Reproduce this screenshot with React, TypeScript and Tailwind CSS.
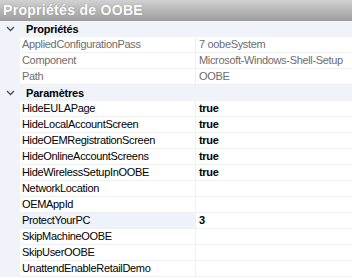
const font = { fontFamily: '"Liberation Sans", Arial, sans-serif' };

type Row = { name: string; value?: string; bold?: boolean; hl?: boolean };

const props: Row[] = [
  { name: 'AppliedConfigurationPass', value: '7 oobeSystem' },
  { name: 'Component', value: 'Microsoft-Windows-Shell-Setup' },
  { name: 'Path', value: 'OOBE' },
];

const params: Row[] = [
  { name: 'HideEULAPage', value: 'true', bold: true },
  { name: 'HideLocalAccountScreen', value: 'true', bold: true },
  { name: 'HideOEMRegistrationScreen', value: 'true', bold: true },
  { name: 'HideOnlineAccountScreens', value: 'true', bold: true },
  { name: 'HideWirelessSetupInOOBE', value: 'true', bold: true },
  { name: 'NetworkLocation' },
  { name: 'OEMAppId' },
  { name: 'ProtectYourPC', value: '3', bold: true, hl: true },
  { name: 'SkipMachineOOBE' },
  { name: 'SkipUserOOBE' },
  { name: 'UnattendEnableRetailDemo' },
];

function Category({ label }: { label: string }) {
  return (
    <div className="flex h-4 items-center bg-[#f0f4fa]">
      <div className="flex w-[20px] justify-center">
        <svg width="9" height="6" viewBox="0 0 9 6">
          <path d="M1 1 L4.5 4.5 L8 1" fill="none" stroke="#505050" strokeWidth="1.4" />
        </svg>
      </div>
      <span className="pl-[6px] text-[11px] font-bold tracking-[-0.2px] text-black">{label}</span>
    </div>
  );
}

function PropRow({ row, muted }: { row: Row; muted?: boolean }) {
  return (
    <div className="flex h-4 bg-[#f0f4fa]">
      <div className="w-[20px]" />
      <div
        className={`flex w-[175px] items-center overflow-hidden whitespace-nowrap border-b border-[#eef0f3] pl-[2px] text-[11px] tracking-[-0.33px] ${row.hl ? 'bg-[#eef3fb]' : 'bg-white'} ${muted ? 'text-[#6d6d6d]' : 'text-black'}`}
      >
        {row.name}
      </div>
      <div
        className={`flex flex-1 items-center overflow-hidden whitespace-nowrap border-b border-l border-[#eef0f3] bg-white pl-[3px] text-[11px] tracking-[-0.33px] ${muted ? 'text-[#6d6d6d]' : 'text-black'} ${row.bold ? 'font-bold' : ''}`}
      >
        {row.value}
      </div>
    </div>
  );
}

export default function App() {
  return (
    <div className="h-[278px] w-[352px] overflow-hidden bg-white" style={font}>
      <div className="flex h-[21px] items-center bg-gradient-to-b from-[#d2d2d2] to-[#9c9c9c] pl-[3px]">
        <span className="text-[14px] font-bold tracking-[0.3px] text-white [text-shadow:0_0_1px_#777]">
          Propriétés de OOBE
        </span>
      </div>
      <Category label="Propriétés" />
      {props.map((r) => (
        <PropRow key={r.name} row={r} muted />
      ))}
      <Category label="Paramètres" />
      {params.map((r) => (
        <PropRow key={r.name} row={r} />
      ))}
    </div>
  );
}
